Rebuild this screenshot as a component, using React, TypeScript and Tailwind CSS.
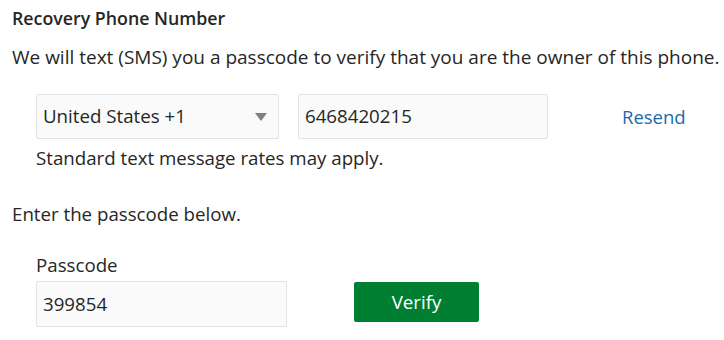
import React from "react";

export default function App() {
  return (
    <div className="w-[724px] h-[340px] bg-white text-[#262626] font-['Open_Sans',sans-serif] overflow-hidden">
      <div className="pl-3 pt-[3px]">
        <h2 className="text-[17.8px] font-semibold leading-[30px]">Recovery Phone Number</h2>
        <p className="mt-[12px] text-[19px] leading-[24px] whitespace-nowrap">
          We will text (SMS) you a passcode to verify that you are the owner of this phone.
        </p>
        <div className="pl-6 mt-[25px]">
          <div className="flex items-center">
            <div className="w-[243px] h-[45px] border border-[#e3e3e3] bg-[#fafafa] rounded-[2px] flex items-center justify-between pl-[6px] pr-[11px] text-[18.7px]">
              <span>United States +1</span>
              <svg width="12" height="8" viewBox="0 0 12 8">
                <polygon points="0,0 12,0 6,8" fill="#808080" />
              </svg>
            </div>
            <div className="ml-[19px] w-[250px] h-[45px] border border-[#e3e3e3] bg-[#fafafa] rounded-[2px] flex items-center pl-[6px] text-[18.7px]">
              6468420215
            </div>
            <span className="ml-[74px] text-[18.5px] text-[#1c6aa8]">Resend</span>
          </div>
          <p className="mt-[7px] text-[18.7px] leading-[24px]">Standard text message rates may apply.</p>
        </div>
        <p className="mt-[32px] text-[18.7px] leading-[24px]">Enter the passcode below.</p>
        <div className="pl-6 mt-[27px] flex items-end">
          <div>
            <div className="text-[18.7px] leading-[24px]">Passcode</div>
            <div className="mt-[4px] w-[251px] h-[46px] border border-[#e3e3e3] bg-[#fafafa] rounded-[2px] flex items-center pl-[6px] text-[18.7px]">
              399854
            </div>
          </div>
          <button className="ml-[67px] mb-[5px] w-[125px] h-[40px] bg-[#007f32] text-white text-[18.7px] rounded-[2px] flex items-center justify-center">
            Verify
          </button>
        </div>
      </div>
    </div>
  );
}
